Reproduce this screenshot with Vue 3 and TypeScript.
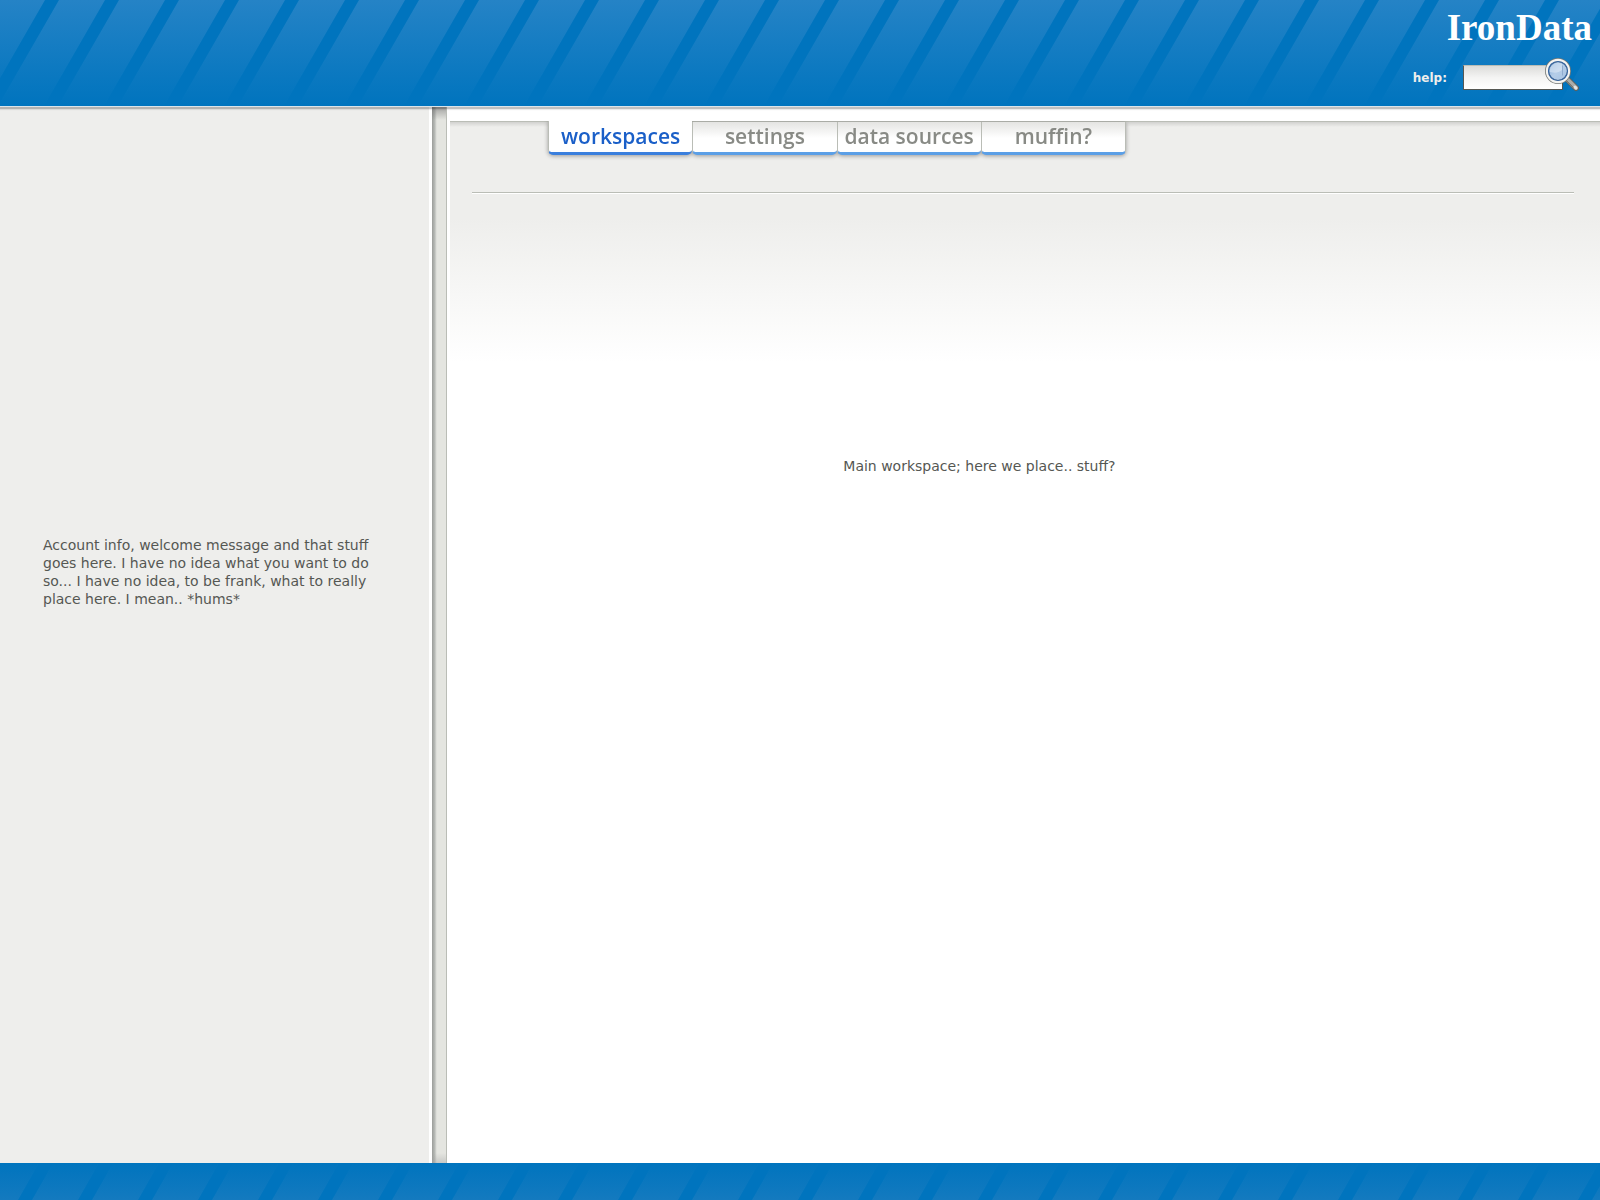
<script setup lang="ts">
import { ref } from 'vue'

const tabs: string[] = ['workspaces', 'settings', 'data sources', 'muffin?']
const active = ref('workspaces')
const query = ref('')
</script>

<template>
  <div class="page">
    <header class="header">
      <svg class="stripes" aria-hidden="true">
        <defs>
          <linearGradient id="head-fade" x1="0" y1="0" x2="0" y2="1">
            <stop offset="0" stop-color="#2583c6" />
            <stop offset="1" stop-color="#0074be" />
          </linearGradient>
          <pattern id="head-stripes" width="60" height="106" patternUnits="userSpaceOnUse">
            <path d="M45 0H59L-2 106H-16ZM105 0H119L58 106H44Z" fill="#0074be" />
          </pattern>
        </defs>
        <rect width="100%" height="100%" fill="url(#head-fade)" />
        <rect width="100%" height="100%" fill="url(#head-stripes)" />
      </svg>
      <h1 class="logo">IronData</h1>
      <form class="search" @submit.prevent>
        <label for="help">help:</label>
        <input id="help" v-model="query" type="text" />
        <button type="submit" aria-label="Search">
          <svg width="36" height="36" viewBox="0 0 36 36">
            <defs>
              <linearGradient id="lens" x1="0" y1="0" x2="1" y2="1">
                <stop offset="0" stop-color="#729fcf" />
                <stop offset=".5" stop-color="#b5cde8" />
                <stop offset="1" stop-color="#a3c1e2" />
              </linearGradient>
            </defs>
            <path d="M23 22L32 31" stroke="#5f615d" stroke-width="6" stroke-linecap="round" />
            <path d="M23 22L32 31" stroke="#aaaca8" stroke-width="4" stroke-linecap="round" />
            <path d="M22 23L30 31" stroke="#777975" stroke-width="1" />
            <path d="M31 30L32 31" stroke="#e2e3e0" stroke-width="3" stroke-linecap="round" />
            <circle cx="14" cy="14" r="11" fill="url(#lens)" stroke="#777975" stroke-width="4" />
            <circle cx="14" cy="14" r="11" fill="none" stroke="#f4f4f2" stroke-width="2.4" />
            <circle cx="14" cy="14" r="9.5" fill="none" stroke="#3465a4" stroke-width="1.2" />
            <path d="M6 15A8 8 0 0 1 18 7V13Q14 17 6 15Z" fill="#dce8f5" opacity=".6" />
            <path d="M18.500 8.500V18.500" stroke="#8fabcf" stroke-width="1" />
          </svg>
        </button>
      </form>
    </header>

    <div class="body">
      <aside class="sidebar">
        <p>
          Account info, welcome message and that stuff goes here. I have no idea what you want to do
          so... I have no idea, to be frank, what to really place here. I mean.. *hums*
        </p>
      </aside>
      <div class="divider"></div>
      <main class="main">
        <div class="strip"></div>
        <div class="panel">
          <nav class="tabs">
            <a
              v-for="tab in tabs"
              :key="tab"
              href="#"
              :class="{ active: tab === active }"
              @click.prevent="active = tab"
              >{{ tab }}</a
            >
          </nav>
          <hr />
          <p>Main workspace; here we place.. stuff?</p>
        </div>
      </main>
    </div>

    <footer class="footer">
      <svg class="stripes" aria-hidden="true">
        <defs>
          <linearGradient id="foot-fade" x1="0" y1="0" x2="0" y2="1">
            <stop offset="0" stop-color="#0074be" />
            <stop offset="1" stop-color="#147abf" />
          </linearGradient>
          <pattern id="foot-stripes" width="60" height="37" patternUnits="userSpaceOnUse">
            <path d="M39 0H53L32 37H18Z" fill="#0074be" />
          </pattern>
        </defs>
        <rect width="100%" height="100%" fill="url(#foot-fade)" />
        <rect width="100%" height="100%" fill="url(#foot-stripes)" />
      </svg>
    </footer>
  </div>
</template>

<style>
body {
  margin: 0;
}
</style>

<style scoped>
.page {
  display: flex;
  flex-direction: column;
  min-height: 100vh;
  font-family: 'DejaVu Sans', sans-serif;
  font-size: 14px;
  line-height: 18px;
  color: #555753;
  background: #fff;
}
.header {
  position: relative;
  display: flex;
  flex-direction: column;
  align-items: flex-end;
  height: 106px;
  z-index: 1;
  box-shadow: 0 1px 0 #dbe4ea, 0 3px 0 rgba(0, 0, 0, 0.18), 0 4px 1px rgba(0, 0, 0, 0.08);
}
.stripes {
  position: absolute;
  inset: 0;
  width: 100%;
  height: 100%;
}
.logo {
  position: relative;
  margin: 7px 8px 0 0;
  font: bold 37px/42px 'Liberation Serif', serif;
  color: #fff;
}
.search {
  position: relative;
  display: flex;
  align-items: flex-start;
  margin: 8px 20px 0 0;
}
.search label {
  margin: 12px 16px 0 0;
  font-size: 12px;
  font-weight: bold;
  color: #eeeeec;
}
.search input {
  box-sizing: border-box;
  width: 100px;
  height: 25px;
  margin-top: 8px;
  padding: 0 20px 0 4px;
  border: 1px solid #555753;
  border-top-color: #babdb6;
  background: linear-gradient(#dcdcda, #f4f4f3 50%, #fff);
  font: inherit;
  outline: none;
}
.search button {
  margin: 0 0 0 -19px;
  padding: 0;
  border: 0;
  background: none;
  height: 36px;
}
.search button svg {
  display: block;
}
.body {
  display: flex;
  flex: 1;
}
.sidebar {
  box-sizing: border-box;
  width: 27%;
  padding: 430px 43px 0;
  border-right: 3px solid #fff;
  background: #eeeeec;
}
.sidebar p {
  margin: 0;
}
.divider {
  box-sizing: border-box;
  width: 15px;
  border-right: 1px solid #babdb6;
  background:
    linear-gradient(rgba(110, 110, 110, 0.6), transparent) top / 100% 14px no-repeat,
    linear-gradient(transparent, rgba(160, 160, 160, 0.4)) bottom / 100% 10px no-repeat,
    linear-gradient(90deg, #9b9d9a, #babdb9 3px, #d6d7d3 4px, #e4e5e0 5px);
}
.main {
  display: flex;
  flex-direction: column;
  flex: 1;
  padding-left: 3px;
}
.strip {
  height: 15px;
  border-bottom: 1px solid #babdb6;
  background: #fff;
}
.panel {
  flex: 1;
  background:
    linear-gradient(rgba(0, 0, 0, 0.12), transparent) top / 100% 5px no-repeat,
    linear-gradient(#eeeeec 96px, #fff 240px);
}
.tabs {
  display: flex;
  width: 578px;
  margin-left: 98px;
  filter: drop-shadow(0 1px 2px rgba(0, 0, 0, 0.35));
  clip-path: inset(-1px -6px -6px);
}
.tabs a {
  box-sizing: border-box;
  flex: 1;
  height: 33px;
  border-left: 1px solid #babdb6;
  border-bottom: 3px solid #5b9fe6;
  border-radius: 0 0 5px 5px;
  background: linear-gradient(#e4e4e2, #fff 16px);
  font: 600 21px/28px 'Open Sans', sans-serif;
  text-align: center;
  text-decoration: none;
  color: #888a85;
}
.tabs a:last-child {
  border-right: 1px solid #babdb6;
}
.tabs a.active {
  height: 34px;
  margin-top: -1px;
  padding-top: 1px;
  border-bottom-color: #3a7fdd;
  background: #fff;
  color: #1a5fc8;
}
.panel hr {
  height: 1px;
  margin: 37px 26px 0 22px;
  border: 0;
  border-top: 1px solid #babdb6;
  background: #fff;
}
.panel p {
  margin: 263px 26px 0 34.2%;
}
.footer {
  position: relative;
  height: 37px;
}
</style>
